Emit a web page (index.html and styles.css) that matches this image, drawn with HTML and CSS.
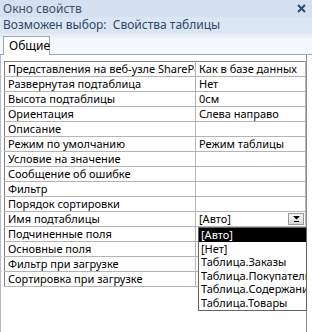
FILE: index.html
```html
<!DOCTYPE html>
<html lang="ru">
  <head>
    <meta charset="UTF-8" />
    <title>Окно свойств</title>
    <link rel="stylesheet" href="styles.css">
  </head>
  <body>
    <div class="window">
      <div class="titleBar">
        <span class="title">Окно свойств</span>
        <svg class="close" width="9" height="9" viewBox="0 0 9 9">
          <path d="M1 1 L8 8 M8 1 L1 8" stroke="#2d4a73" stroke-width="2" />
        </svg>
      </div>
      <div class="selection">Возможен выбор:&nbsp; Свойства таблицы</div>
      <div class="tabStrip">
        <div class="tab">Общие</div>
      </div>
      <div class="panel">
        <table class="props">
          <tbody>
            <tr><td class="name">Представления на веб-узле SharePoint</td><td>Как в базе данных</td></tr>
            <tr><td class="name">Развернутая подтаблица</td><td>Нет</td></tr>
            <tr><td class="name">Высота подтаблицы</td><td>0см</td></tr>
            <tr><td class="name">Ориентация</td><td>Слева направо</td></tr>
            <tr><td class="name">Описание</td><td></td></tr>
            <tr><td class="name">Режим по умолчанию</td><td>Режим таблицы</td></tr>
            <tr><td class="name">Условие на значение</td><td></td></tr>
            <tr><td class="name">Сообщение об ошибке</td><td></td></tr>
            <tr><td class="name">Фильтр</td><td></td></tr>
            <tr><td class="name">Порядок сортировки</td><td></td></tr>
            <tr>
              <td class="name">Имя подтаблицы</td>
              <td class="combo">
                <span>[Авто]</span>
                <span class="comboButton">
                  <svg width="9" height="6" viewBox="0 0 9 6">
                    <path d="M1 0 L8 0 L4.5 3.5 Z" fill="#000" />
                    <path d="M2 5.5 L7 5.5" stroke="#000" stroke-width="1" />
                  </svg>
                </span>
              </td>
            </tr>
            <tr><td class="name">Подчиненные поля</td><td></td></tr>
            <tr><td class="name">Основные поля</td><td></td></tr>
            <tr><td class="name">Фильтр при загрузке</td><td></td></tr>
            <tr><td class="name">Сортировка при загрузке</td><td></td></tr>
          </tbody>
        </table>
      </div>
      <ul class="dropList">
        <li class="selected">[Авто]</li>
        <li>[Нет]</li>
        <li>Таблица.Заказы</li>
        <li>Таблица.Покупатели</li>
        <li>Таблица.Содержание заказов</li>
        <li>Таблица.Товары</li>
      </ul>
    </div>
  </body>
</html>
```

FILE: styles.css
```css
body {
  margin: 0;
  font-family: "Noto Sans", "Open Sans", sans-serif;
  font-size: 11px;
  color: #000;
  background: #fff;
}

.window {
  position: relative;
  width: 312px;
  height: 332px;
  overflow: hidden;
}

.titleBar {
  height: 17px;
  background: #d5e1f0;
  color: #3f5068;
  font-size: 12px;
  display: flex;
  align-items: center;
  justify-content: space-between;
  padding: 0 6px 0 3px;
  line-height: 17px;
}

.close {
  display: block;
}

.selection {
  height: 16px;
  line-height: 16px;
  padding-left: 3px;
  font-size: 12px;
  background: #dbe6f4;
  color: #2e4668;
}

.tabStrip {
  height: 21px;
  background: linear-gradient(#dfe8f4, #f4f7fb 30%);
  display: flex;
  align-items: flex-end;
  padding-left: 3px;
  border-bottom: 1px solid #9aa7b8;
}

.tab {
  height: 18px;
  line-height: 18px;
  padding: 0 5px;
  width: 35px;
  font-size: 12px;
  background: #fff;
  border: 1px solid #9aa7b8;
  border-bottom: none;
  margin-bottom: -1px;
  color: #000;
}

.panel {
  height: 277px;
  background: #fff;
  border-left: 1px solid #b5bcc6;
  border-right: 1px solid #8d8d8d;
  width: 307px;
  padding: 6px 0 0 3px;
  box-sizing: border-box;
}

.props {
  border-collapse: collapse;
  table-layout: fixed;
  width: 302px;
}

.props td {
  height: 14px;
  line-height: 14px;
  padding: 0 3px;
  border: 1px solid #b4b4b4;
  white-space: nowrap;
  overflow: hidden;
}

.props td.name {
  width: 184px;
  border-left-color: #808080;
}

.props tr:first-child td {
  border-top-color: #808080;
}

.combo {
  position: relative;
}

.comboButton {
  position: absolute;
  right: 1px;
  top: 1px;
  width: 14px;
  height: 10px;
  border: 1px solid #9a9a9a;
  background: linear-gradient(#fafafa, #d8d8d8);
  display: flex;
  align-items: center;
  justify-content: center;
}

.comboButton svg {
  display: block;
}

.dropList {
  position: absolute;
  left: 198px;
  top: 227px;
  width: 107px;
  margin: 0;
  padding: 0;
  list-style: none;
  background: #fff;
  border: 1px solid #646464;
}

.dropList li {
  height: 13.6px;
  line-height: 13.6px;
  padding-left: 2px;
  white-space: nowrap;
  overflow: hidden;
}

.dropList li.selected {
  background: #000;
  color: #fff;
}
```
